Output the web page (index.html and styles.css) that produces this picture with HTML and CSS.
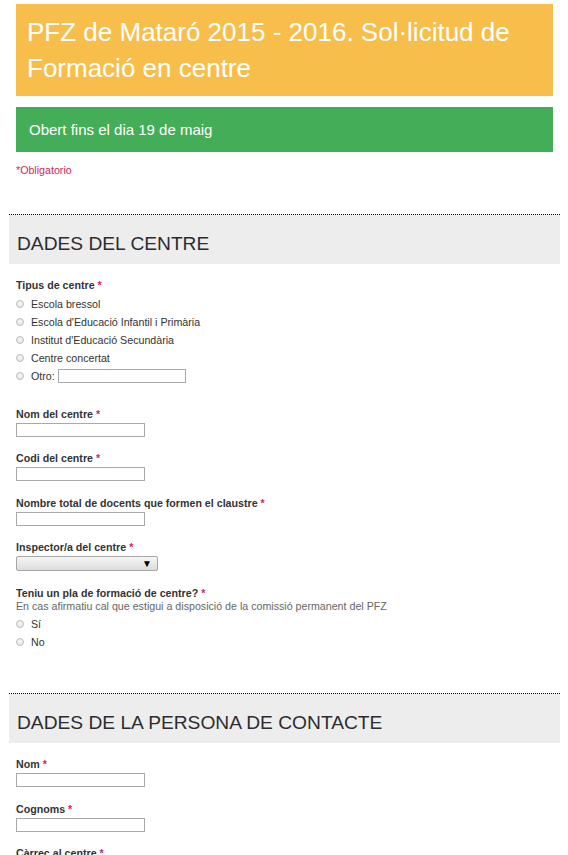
FILE: index.html
```html
<!DOCTYPE html>
<html lang="ca">
<head>
<meta charset="utf-8">
<title>PFZ de Mataró 2015 - 2016</title>
<link rel="stylesheet" href="styles.css">
</head>
<body>
<div class="page">
  <header class="form-header">
    <h1 class="title">PFZ de Mataró 2015 - 2016. Sol·licitud de Formació en centre</h1>
    <div class="notice">Obert fins el dia 19 de maig</div>
    <div class="required-note">*Obligatorio</div>
  </header>

  <section class="section">
    <h2 class="section-title">DADES DEL CENTRE</h2>
    <div class="fields">
      <div class="q">
        <div class="q-label">Tipus de centre <span class="ast">*</span></div>
        <div class="options">
          <label class="opt"><input class="radio" type="radio" name="tipus"><span>Escola bressol</span></label>
          <label class="opt"><input class="radio" type="radio" name="tipus"><span>Escola d'Educació Infantil i Primària</span></label>
          <label class="opt"><input class="radio" type="radio" name="tipus"><span>Institut d'Educació Secundària</span></label>
          <label class="opt"><input class="radio" type="radio" name="tipus"><span>Centre concertat</span></label>
          <label class="opt"><input class="radio" type="radio" name="tipus"><span>Otro:</span><input class="text other" type="text"></label>
        </div>
      </div>

      <div class="q">
        <div class="q-label">Nom del centre <span class="ast">*</span></div>
        <input class="text" type="text">
      </div>

      <div class="q">
        <div class="q-label">Codi del centre <span class="ast">*</span></div>
        <input class="text" type="text">
      </div>

      <div class="q">
        <div class="q-label">Nombre total de docents que formen el claustre <span class="ast">*</span></div>
        <input class="text" type="text">
      </div>

      <div class="q">
        <div class="q-label">Inspector/a del centre <span class="ast">*</span></div>
        <div class="select"><span class="arrow">▼</span></div>
      </div>

      <div class="q">
        <div class="q-label">Teniu un pla de formació de centre? <span class="ast">*</span></div>
        <div class="help">En cas afirmatiu cal que estigui a disposició de la comissió permanent del PFZ</div>
        <div class="options">
          <label class="opt"><input class="radio" type="radio" name="pla"><span>Sí</span></label>
          <label class="opt"><input class="radio" type="radio" name="pla"><span>No</span></label>
        </div>
      </div>
    </div>
  </section>

  <section class="section">
    <h2 class="section-title">DADES DE LA PERSONA DE CONTACTE</h2>
    <div class="fields">
      <div class="q">
        <div class="q-label">Nom <span class="ast">*</span></div>
        <input class="text" type="text">
      </div>
      <div class="q">
        <div class="q-label">Cognoms <span class="ast">*</span></div>
        <input class="text" type="text">
      </div>
      <div class="q">
        <div class="q-label">Càrrec al centre <span class="ast">*</span></div>
        <input class="text" type="text">
      </div>
    </div>
  </section>
</div>
</body>
</html>
```

FILE: styles.css
```css
html, body {
  margin: 0;
  padding: 0;
  background: #fff;
}

body {
  font-family: "Liberation Sans", Arial, sans-serif;
  color: #333;
}

.page {
  padding: 4px 8px 0 9px;
}

.form-header {
  padding: 0 7px 37px;
}

.title {
  margin: 0;
  background: #f8be4b;
  color: #fff;
  font-weight: normal;
  font-size: 26px;
  line-height: 36px;
  padding: 10px 12px 10px 11px;
}

.notice {
  margin-top: 11px;
  background: #43ae57;
  color: #fff;
  font-size: 15px;
  height: 45px;
  line-height: 45px;
  padding: 0 13px;
}

.required-note {
  margin-top: 11px;
  font-size: 8pt;
  line-height: 14px;
  color: #d4245e;
}

.section {
  border-top: 1px dotted #000;
}

.section-title {
  margin: 0;
  background: #ededed;
  font-weight: normal;
  font-size: 19.2px;
  line-height: 24px;
  padding: 17px 8px 8px;
  color: #2c2c30;
}

.fields {
  padding: 14px 7px 21px;
}

.q {
  margin-bottom: 14.5px;
}

.q-label {
  font-weight: bold;
  font-size: 8pt;
  line-height: 14px;
  color: #333;
}

.ast {
  color: #d4245e;
}

.help {
  font-size: 8pt;
  line-height: 12px;
  color: #666;
}

.options {
  margin-top: 3px;
  padding-bottom: 7px;
  display: flex;
  flex-direction: column;
}

.opt {
  display: flex;
  align-items: center;
  height: 18px;
  font-size: 8pt;
  color: #333;
}

.radio {
  appearance: none;
  -webkit-appearance: none;
  width: 8px;
  height: 8px;
  margin: 0 7px 0 0;
  border: 1px solid #bdbdbd;
  border-radius: 50%;
  background: radial-gradient(circle at 50% 40%, #f6f6f6 0%, #e2e2e2 100%);
  box-sizing: border-box;
  flex: none;
}

.text {
  display: block;
  margin: 2px 0 0;
  width: 129px;
  height: 14px;
  box-sizing: border-box;
  border: 1px solid #a9a9a9;
  padding: 0;
  background: #fff;
  font: inherit;
}

.text.other {
  display: inline-block;
  margin: 0 0 0 3px;
  width: 128px;
}

.select {
  margin-top: 2px;
  width: 142px;
  height: 15px;
  box-sizing: border-box;
  border: 1px solid #a6a6a6;
  border-radius: 2px;
  background: linear-gradient(#f6f6f6, #dcdcdc);
  display: flex;
  align-items: center;
  justify-content: flex-end;
  padding-right: 5px;
}

.arrow {
  font-size: 10px;
  line-height: 10px;
  color: #000;
}
```
